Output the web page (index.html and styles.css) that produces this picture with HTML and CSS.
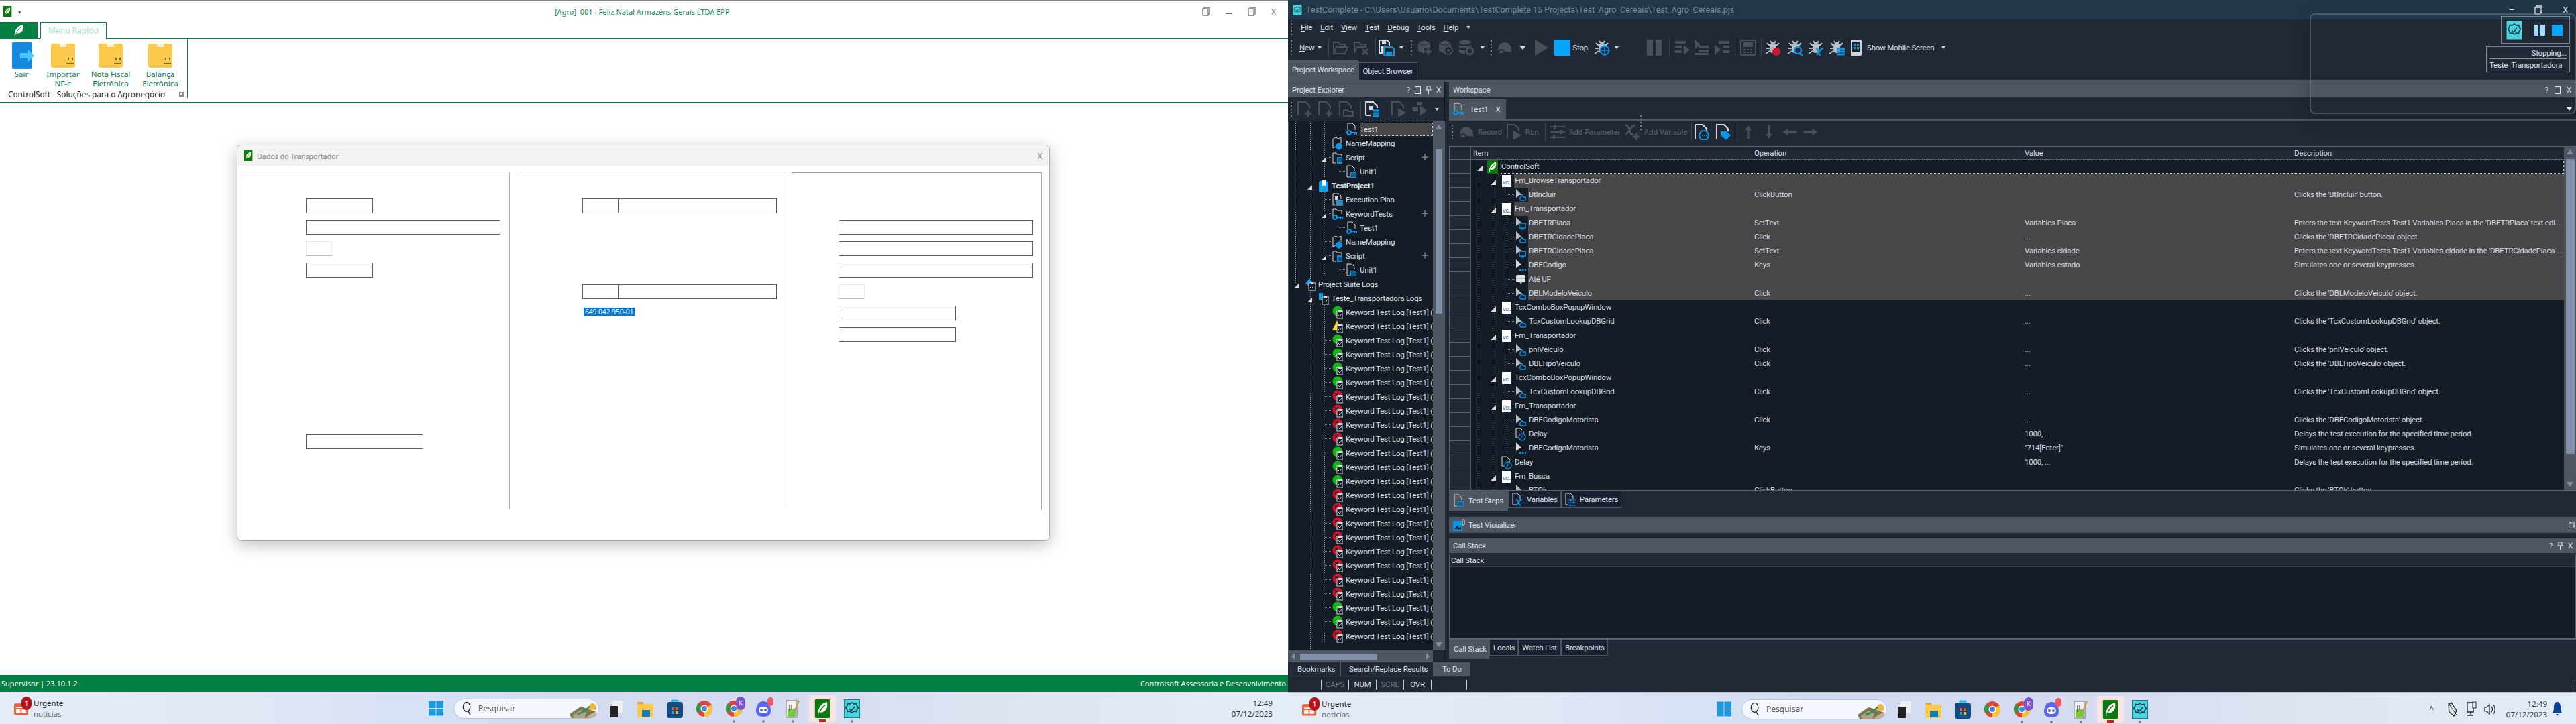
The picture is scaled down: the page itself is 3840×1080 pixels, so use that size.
FILE: index.html
```html
<!DOCTYPE html>
<html lang="pt-BR">
<head>
    <meta charset="UTF-8">
    <meta name="viewport" content="width=device-width, initial-scale=1.0">
    <title>ControlSoft / TestComplete</title>
    <link rel="stylesheet" href="styles.css">
</head>
<body>

    <!-- icon sprites -->
    <svg class="sprites" xmlns="http://www.w3.org/2000/svg">
        <symbol id="leaf" viewBox="0 0 16 20"><rect width="16" height="20" rx="1" fill="#0a7a0a"/><path d="M3 17C3 9 7 4 13 3c1 6-1 10-6 11-1 0-2 0-3 3z" fill="#fff"/><path d="M4 16C6 11 8 8 11 6" stroke="#0a7a0a" fill="none"/></symbol>
        <symbol id="leaf-bare" viewBox="0 0 16 20"><path d="M1 19C1 9 6 3 15 1c1 8-1 13-8 14-2 0-4 1-6 4z" fill="#fff"/><path d="M3 16C6 11 8 8 12 5" stroke="#0a7f44" fill="none"/></symbol>
        <symbol id="exit" viewBox="0 0 34 40"><rect width="30" height="40" rx="2" fill="#1389e0"/><path d="M12 16h11v-6l10 10-10 10v-6H12z" fill="#47c7fb"/></symbol>
        <symbol id="box" viewBox="0 0 36 36"><rect width="36" height="36" rx="3" fill="#fdc94a"/><rect x="13" width="10" height="5" fill="#fef1d4"/><path d="M23 30h11M26 25v-4M32 25v-4" stroke="#7b6328" stroke-width="2" fill="none"/></symbol>

        <symbol id="open" viewBox="0 0 24 24"><path d="M2 21V4h7l2 3h8v4M2 21l4-10h17l-4 10z" stroke="currentColor" stroke-width="2" fill="none"/></symbol>
        <symbol id="closefile" viewBox="0 0 24 24"><path d="M2 19V4h7l2 3h8v4M2 19l4-8h14" stroke="currentColor" stroke-width="2" fill="none"/><path d="M14 14l8 8M22 14l-8 8" stroke="currentColor" stroke-width="3"/></symbol>
        <symbol id="save" viewBox="0 0 24 24"><path d="M1 1h12l3 3v7H5v9H1z" fill="none" stroke="#d6d9de" stroke-width="2"/><rect x="5" y="2" width="6" height="5" fill="#d6d9de"/><path d="M8 11h12l3 3v10H8z" fill="none" stroke="#0a96e6" stroke-width="2"/><rect x="11" y="18" width="9" height="5" fill="#0a96e6"/></symbol>
        <symbol id="cube-plus" viewBox="0 0 24 24"><path d="M11 1l9 4v7H11v9l-9-4V5z" fill="currentColor"/><path d="M2 5l9 4 9-4" stroke="#212836" fill="none"/><path d="M17 13v10M12 18h10" stroke="currentColor" stroke-width="3"/></symbol>
        <symbol id="cube-target" viewBox="0 0 24 24"><path d="M11 1l9 4v5l-9 11-9-4V5z" fill="currentColor"/><path d="M2 5l9 4 9-4" stroke="#212836" fill="none"/><circle cx="16" cy="16" r="6" fill="#212836" stroke="currentColor" stroke-width="2"/><circle cx="16" cy="16" r="2" fill="currentColor"/></symbol>
        <symbol id="db-gear" viewBox="0 0 24 24"><ellipse cx="10" cy="4" rx="9" ry="3.5" fill="currentColor"/><path d="M1 8c3 2 15 2 18 0v4H1zM1 14c3 2 8 2 9 2v5c-3 0-7 0-9-2z" fill="currentColor"/><circle cx="17" cy="17" r="5" fill="none" stroke="currentColor" stroke-width="3"/></symbol>
        <symbol id="record" viewBox="0 0 24 24"><path d="M2 14a10 10 0 1 1 20 0v6H2z" fill="currentColor"/><circle cx="7" cy="19" r="4" fill="none" stroke="#212836" stroke-width="2"/><path d="M11 19h9v4" stroke="#212836" fill="none" stroke-width="2"/></symbol>
        <symbol id="play" viewBox="0 0 24 24"><path d="M2 0l20 12L2 24z" fill="currentColor"/></symbol>
        <symbol id="bug" viewBox="0 0 24 24"><path d="M8 2l2 3h4l2-3M5 8h14M3 5l4 4M21 5l-4 4M2 13h5M1 21l6-4" stroke="#b9bdc3" stroke-width="2" fill="none"/><path d="M7 7h10v10c0 4-10 4-10 0z" fill="#b9bdc3"/></symbol>
        <symbol id="bug-target" viewBox="0 0 24 24"><use href="#bug"/><circle cx="16" cy="16" r="6.5" fill="#212836" stroke="#0a96e6" stroke-width="2"/><path d="M16 8v16M8 16h16" stroke="#0a96e6" stroke-width="1.5"/></symbol>
        <symbol id="bug-red" viewBox="0 0 24 24"><use href="#bug"/><circle cx="17" cy="18" r="6" fill="#d3152c"/></symbol>
        <symbol id="bug-find" viewBox="0 0 24 24"><use href="#bug"/><circle cx="16" cy="16" r="5" fill="#212836" stroke="#0a96e6" stroke-width="2.5"/><path d="M19 20l4 4" stroke="#0a96e6" stroke-width="3"/></symbol>
        <symbol id="bug-x" viewBox="0 0 24 24"><use href="#bug"/><path d="M12 13c4 0 3 10 7 10M23 13c-4 0-6 6-10 10" stroke="#0a96e6" stroke-width="2.5" fill="none"/></symbol>
        <symbol id="bug-list" viewBox="0 0 24 24"><use href="#bug"/><path d="M12 14h12M12 18h12M12 22h12" stroke="#0a96e6" stroke-width="3"/></symbol>
        <symbol id="pause" viewBox="0 0 24 24"><path d="M1 0h9v24H1zM14 0h9v24h-9z" fill="currentColor"/></symbol>
        <symbol id="step-in" viewBox="0 0 24 24"><path d="M1 2h16v4H1zM1 9h10v4H1zM1 16h10v4H1zM14 8l9 7-9 8z" fill="currentColor"/></symbol>
        <symbol id="step-over" viewBox="0 0 24 24"><path d="M2 0l9 7-9 7zM8 9h15v4H8zM8 15h15v4H8zM2 20h21v3H2z" fill="currentColor"/></symbol>
        <symbol id="step-out" viewBox="0 0 24 24"><path d="M7 2h16v4H7zM13 9h10v4H13zM13 16h10v4H13zM1 8l9 7-9 8z" fill="currentColor"/></symbol>
        <symbol id="calc" viewBox="0 0 24 24"><rect x="1" y="1" width="22" height="22" rx="2" fill="none" stroke="currentColor" stroke-width="2"/><rect x="5" y="4" width="14" height="7" fill="currentColor"/><path d="M5 15h3M10 15h3M15 15h3M5 19h3M10 19h3M15 19h3" stroke="currentColor" stroke-width="2"/></symbol>
        <symbol id="phone" viewBox="0 0 16 24"><rect width="16" height="24" rx="2" fill="#cfd3d8"/><rect x="2" y="3" width="12" height="16" fill="#212836"/><path d="M4 6h3v3H4zM9 6h3v3H9zM4 11h3v3H4zM9 11h3v3H9z" fill="#0a96e6"/></symbol>

        <symbol id="doc-plus" viewBox="0 0 24 24"><path d="M2 21V1h11l6 6v4" fill="none" stroke="currentColor" stroke-width="2"/><path d="M17 13v10M12 18h10" stroke="currentColor" stroke-width="3"/></symbol>
        <symbol id="doc-open" viewBox="0 0 24 24"><path d="M2 21V1h11l6 6v4" fill="none" stroke="currentColor" stroke-width="2"/><path d="M8 22v-9h5l2 2h7v7z" fill="none" stroke="currentColor" stroke-width="2"/></symbol>
        <symbol id="doc-plan" viewBox="0 0 24 24"><path d="M2 21V1h11l6 6v3M9 21H2" fill="none" stroke="#d6d9de" stroke-width="2"/><rect x="7" y="7" width="5" height="6" fill="#d6d9de"/><path d="M12 14h10M12 18h10M12 22h10" stroke="#0a96e6" stroke-width="3"/></symbol>
        <symbol id="doc-run" viewBox="0 0 24 24"><path d="M2 21V1h11l6 6v4" fill="none" stroke="currentColor" stroke-width="2"/><path d="M11 10l12 7-12 7z" fill="currentColor"/></symbol>
        <symbol id="diamond-run" viewBox="0 0 24 24"><path d="M8 1h8v5H8zM2 9h8v6H2zM13 6l10 8-10 8z" fill="currentColor"/></symbol>
        <symbol id="doc-comment" viewBox="0 0 24 24"><path d="M2 23V1h11l6 6v4" fill="none" stroke="#d6d9de" stroke-width="2"/><circle cx="15" cy="17" r="7" fill="#212836" stroke="#0a96e6" stroke-width="2"/><path d="M12 17h1M15 17h1M18 17h1" stroke="#0a96e6" stroke-width="2"/></symbol>
        <symbol id="doc-tag" viewBox="0 0 24 24"><path d="M2 23V1h11l6 6v4" fill="none" stroke="#d6d9de" stroke-width="2"/><path d="M8 11h9l6 6-7 7-8-7z" fill="#0a96e6"/></symbol>
        <symbol id="sliders" viewBox="0 0 24 24"><path d="M1 4h22M1 12h22M1 20h22" stroke="currentColor" stroke-width="2"/><path d="M6 1h3v6H6zM15 9h3v6h-3zM5 17h3v6H5z" fill="currentColor"/></symbol>
        <symbol id="var-plus" viewBox="0 0 24 24"><path d="M2 2c8 0 4 14 12 14M16 2C10 2 8 12 2 16" stroke="currentColor" stroke-width="3" fill="none"/><path d="M18 14v10M13 19h10" stroke="currentColor" stroke-width="3"/></symbol>
        <symbol id="arrow-up" viewBox="0 0 14 24"><path d="M7 0l6 9H9v15H5V9H1z" fill="currentColor"/></symbol>
        <symbol id="arrow-down" viewBox="0 0 14 24"><path d="M7 24l6-9H9V0H5v15H1z" fill="currentColor"/></symbol>
        <symbol id="arrow-left" viewBox="0 0 24 14"><path d="M0 7l9-6v4h15v4H9v4z" fill="currentColor"/></symbol>
        <symbol id="arrow-right" viewBox="0 0 24 14"><path d="M24 7l-9-6v4H0v4h15v4z" fill="currentColor"/></symbol>

        <symbol id="t-key" viewBox="0 0 16 20"><path d="M2 11V1h7l4 4v6" fill="none" stroke="#d6d9de"/><circle cx="4" cy="15" r="3" fill="none" stroke="#0a96e6" stroke-width="2"/><path d="M7 15h8v3M12 15v3" stroke="#0a96e6" stroke-width="2" fill="none"/></symbol>
        <symbol id="t-unit" viewBox="0 0 16 20"><path d="M5 18H1V1h7l4 4v4" fill="none" stroke="#d6d9de"/><path d="M6 11h9v8H6z" fill="#0a96e6"/><path d="M7 13h7M7 15h7M7 17h7" stroke="#151c25"/></symbol>
        <symbol id="t-script" viewBox="0 0 16 20"><path d="M5 18H1V3h5l1 2h7v3" fill="none" stroke="#d6d9de"/><path d="M7 9h8v10H7z" fill="#0a96e6"/><path d="M8 12h6M8 14h6M8 16h6" stroke="#151c25"/></symbol>
        <symbol id="t-map" viewBox="0 0 16 20"><path d="M1 17V3l4-2 4 2 4-2v9M1 17l4-2" fill="none" stroke="#d6d9de"/><path d="M10 9l5 3v5l-5 3-5-3v-5z" fill="#0a96e6"/></symbol>
        <symbol id="t-kwfolder" viewBox="0 0 16 20"><path d="M1 14V3h5l1 2h7v5" fill="none" stroke="#d6d9de"/><circle cx="4" cy="15" r="3" fill="none" stroke="#0a96e6" stroke-width="2"/><path d="M7 15h8v3M12 15v3" stroke="#0a96e6" stroke-width="2" fill="none"/></symbol>
        <symbol id="t-proj" viewBox="0 0 16 20"><path d="M1 4l5-2h4l5 3v14H1z" fill="#0ea0ea"/><path d="M6 2h5v9l-3-2-2 2z" fill="#fff"/></symbol>
        <symbol id="t-plan" viewBox="0 0 16 20"><path d="M4 18H1V1h9l3 3v5" fill="none" stroke="#d6d9de"/><rect x="4" y="5" width="4" height="5" fill="#d6d9de"/><path d="M6 12h10M6 15h10M6 18h10" stroke="#0a96e6" stroke-width="2"/></symbol>
        <symbol id="t-suite" viewBox="0 0 16 20"><path d="M1 9l6-8 4 6-4 6z" fill="#0ea0ea"/><rect x="6" y="8" width="10" height="11" fill="#151c25" stroke="#d6d9de"/><path d="M9 7h4v3H9z" fill="#d6d9de"/><path d="M8 14l2 2 4-4" stroke="#d6d9de" fill="none"/></symbol>
        <symbol id="t-plog" viewBox="0 0 16 20"><path d="M1 2h6v10H1z" fill="#0ea0ea"/><rect x="6" y="8" width="10" height="11" fill="#151c25" stroke="#d6d9de"/><path d="M9 7h4v3H9z" fill="#d6d9de"/><path d="M8 14l2 2 4-4" stroke="#d6d9de" fill="none"/></symbol>
        <symbol id="log-ok" viewBox="0 0 16 20"><circle cx="8" cy="8" r="7.5" fill="#15b515"/><rect x="7" y="8" width="9" height="11" fill="#151c25" stroke="#d6d9de"/><path d="M9 7h5v3H9z" fill="#d6d9de"/><path d="M9 14l2 2 3-4" stroke="#d6d9de" fill="none"/></symbol>
        <symbol id="log-warn" viewBox="0 0 16 20"><path d="M7 1l7 15H0z" fill="#f4d511"/><rect x="7" y="8" width="9" height="11" fill="#151c25" stroke="#d6d9de"/><path d="M9 7h5v3H9z" fill="#d6d9de"/><path d="M9 14l2 2 3-4" stroke="#d6d9de" fill="none"/></symbol>
        <symbol id="log-err" viewBox="0 0 16 20"><circle cx="8" cy="8" r="7.5" fill="#d3152c"/><path d="M4 4l5 5M9 4L4 9" stroke="#151c25" stroke-width="1.5"/><rect x="7" y="8" width="9" height="11" fill="#151c25" stroke="#d6d9de"/><path d="M9 7h5v3H9z" fill="#d6d9de"/><path d="M9 14l2 2 3-4" stroke="#d6d9de" fill="none"/></symbol>

        <symbol id="g-click" viewBox="0 0 16 20"><path d="M1 1l9 9H6l-1 1-4 3z" fill="#b9bdc3"/><path d="M8 13l2-3 2 3h3v5H8l-2-3z" fill="none" stroke="#0a96e6" stroke-width="1.5"/></symbol>
        <symbol id="g-screen" viewBox="0 0 16 20"><path d="M1 1l9 9H6l-1 1-4 3z" fill="#b9bdc3"/><path d="M6 10h9v7H6z" fill="#151c25" stroke="#0a96e6" stroke-width="1.5"/><path d="M10.5 17v2M8 19h5" stroke="#0a96e6"/></symbol>
        <symbol id="g-keys" viewBox="0 0 16 20"><path d="M1 1l9 9H6l-1 1-4 3z" fill="#d6d9de"/><path d="M6 15h2.500v3H6zM10 15h2.500v3H10zM14 15h2v3h-2z" fill="#0a96e6"/></symbol>
        <symbol id="g-comment" viewBox="0 0 16 20"><path d="M3 3h10a2 2 0 0 1 2 2v7a2 2 0 0 1-2 2h-3l-2 3-1-3H3a2 2 0 0 1-2-2V5a2 2 0 0 1 2-2z" fill="#e6e6e6"/><path d="M1 8h14" stroke="#999"/></symbol>
        <symbol id="g-delay" viewBox="0 0 16 20"><path d="M4 15H1V1h7l4 4v4" fill="none" stroke="#d6d9de"/><circle cx="10" cy="14" r="5" fill="#151c25" stroke="#0a96e6" stroke-width="1.5"/><path d="M10 11v3l-2 2" stroke="#0a96e6" fill="none"/></symbol>
        <symbol id="expand" viewBox="0 0 8 8"><path d="M8 0v8H0z" fill="#d6d9de"/></symbol>
        <symbol id="doc-x" viewBox="0 0 16 20"><path d="M6 18H1V1h7l4 4v4" fill="none" stroke="#d6d9de"/><path d="M6 10c4 0 3 9 7 9M15 10c-4 0-5 6-9 9" stroke="#0a96e6" stroke-width="2" fill="none"/></symbol>
        <symbol id="doc-params" viewBox="0 0 16 20"><path d="M5 18H1V1h7l4 4v4" fill="none" stroke="#d6d9de"/><path d="M4 11h12M4 15h12M4 19h12" stroke="#0a96e6"/><path d="M8 9.500h2v3H8zM12 13.500h2v3h-2zM7 17.500h2v2.500H7z" fill="#0a96e6"/></symbol>

        <symbol id="win" viewBox="0 0 24 24"><path d="M0 0h11.5v11.5H0zM12.500 0H24v11.500H12.500zM0 12.500h11.500V24H0zM12.500 12.500H24V24H12.500z" fill="#1c9ae0"/></symbol>
        <symbol id="news" viewBox="0 0 24 24"><rect x="1" y="4" width="22" height="18" rx="3" fill="#e9613d"/><path d="M4 9h16v2H4zM4 13h7v6H4zM13 13h7v6h-7z" fill="#fff"/></symbol>
        <symbol id="glass" viewBox="0 0 16 24"><ellipse cx="7.5" cy="9" rx="6" ry="8" fill="none" stroke="#222" stroke-width="1.6"/><path d="M10 16l4 7" stroke="#222" stroke-width="1.6"/></symbol>
        <symbol id="hills" viewBox="0 0 48 36"><path d="M34 20c0-16 14-16 14 0z" fill="#f2b33d"/><path d="M0 28l20-14 28 10v12H4z" fill="#7b7a4e"/><path d="M6 30l14-10 10 6-4 10H8z" fill="#b4a082"/><path d="M14 28c8-2 14-6 22-14" stroke="#2e8a5b" stroke-width="3" fill="none"/><path d="M28 34l20-12v14z" fill="#c6b09a"/></symbol>
        <symbol id="blocks" viewBox="0 0 24 28"><rect x="7" y="2" width="15" height="18" rx="1" fill="#eee"/><rect x="3" y="10" width="12" height="17" rx="1" fill="#222"/></symbol>
        <symbol id="explorer" viewBox="0 0 24 28"><path d="M0 4h8l2 3H0z" fill="#e5a42a"/><path d="M0 7h24v20H0z" fill="#fcca4d"/><rect x="7" y="16" width="12" height="10" fill="#0f7cc4"/></symbol>
        <symbol id="store" viewBox="0 0 24 28"><path d="M8 4V2h8v2" fill="none" stroke="#31b7e8" stroke-width="3"/><rect x="0" y="4" width="24" height="24" rx="4" fill="#134b84"/><path d="M7 12h4v4H7zM13 12h4v4h-4z" fill="#e6562a"/><path d="M7 18h4v4H7z" fill="#1ba1e2"/><path d="M13 18h4v4h-4z" fill="#f5b916"/></symbol>
        <symbol id="chrome" viewBox="0 0 24 28"><circle cx="12" cy="14" r="12" fill="#dd4537"/><path d="M12 14L1.6 20A12 12 0 0 1 3 6z" fill="#2a9a47"/><path d="M12 14l0 12a12 12 0 0 0 10.4-18z" fill="#fbc52d"/><circle cx="12" cy="14" r="5.5" fill="#fff"/><circle cx="12" cy="14" r="4" fill="#3e86e8"/></symbol>
        <symbol id="discord" viewBox="0 0 24 28"><path d="M12 3c8 0 11 8 11 14 0 6-3 9-11 9S1 23 1 17C1 11 4 3 12 3z" fill="#5865f2"/><rect x="5" y="11" width="14" height="10" rx="5" fill="#fff"/><circle cx="9" cy="16" r="2" fill="#5865f2"/><circle cx="15" cy="16" r="2" fill="#5865f2"/></symbol>
        <symbol id="notepad" viewBox="0 0 20 28"><rect x="0" y="2" width="16" height="25" fill="#f0f0f0" stroke="#777"/><path d="M2 14h12v12H2z" fill="#78c93a"/><path d="M5 8v10M8 8v7" stroke="#222"/><path d="M13 16L19 2" stroke="#c79a2b" stroke-width="2"/></symbol>
        <symbol id="tc" viewBox="0 0 24 28"><rect width="24" height="28" rx="1" fill="#49d5e0" stroke="#123"/><path d="M12 5l3 2 3.5-.5 1 3.500 2 2.500-2 2.500-1 3.500-3.500-.5-3 2-3-2-3.500.5-1-3.500-2-2.500 2-2.500 1-3.500 3.500.5z" fill="none" stroke="#12333f" stroke-width="1.5"/><path d="M8 14l3 3 5-6" stroke="#12333f" stroke-width="1.5" fill="none"/></symbol>
        <symbol id="bell" viewBox="0 0 14 24"><path d="M7 1c4 0 5 4 5 8s1 7 2 8H0c1-1 2-4 2-8s1-8 5-8zM5 19h4l-2 3z" fill="#06419a"/></symbol>
        <symbol id="restore" viewBox="0 0 12 14"><path d="M3 3V1h8v10H9M1 3h8v10H1z" fill="none" stroke="currentColor" stroke-width="1.3"/></symbol>
        <symbol id="pin" viewBox="0 0 10 14"><path d="M2 1h6v6H2zM0 7h10M5 7v7" fill="none" stroke="currentColor" stroke-width="1.3"/></symbol>
    </svg>

    <!-- left screen: ControlSoft -->
    <section class="screen screen-app">
        <div class="app-title">
            <svg class="qa-logo"><use href="#leaf"/></svg>
            <span class="qa-drop">▾</span>
            <span class="app-name">[Agro]&nbsp; 001 - Feliz Natal Armazéns Gerais LTDA EPP</span>
            <div class="app-controls">
                <svg class="ctl"><use href="#restore"/></svg>
                <span class="ctl-min"></span>
                <svg class="ctl"><use href="#restore"/></svg>
                <span>X</span>
            </div>
        </div>

        <div class="ribbon-tabs">
            <div class="ribbon-home"><svg><use href="#leaf-bare"/></svg></div>
            <div class="ribbon-tab">Menu Rápido</div>
        </div>

        <div class="ribbon">
            <div class="ribbon-group">
                <div class="ribbon-btns">
                    <div class="rb-btn rb-exit"><svg><use href="#exit"/></svg><span>Sair</span></div>
                    <div class="rb-btn rb-import"><svg><use href="#box"/></svg><span>Importar<br>NF-e</span></div>
                    <div class="rb-btn rb-nota"><svg><use href="#box"/></svg><span>Nota Fiscal<br>Eletrônica</span></div>
                    <div class="rb-btn rb-bal"><svg><use href="#box"/></svg><span>Balança<br>Eletrônica</span></div>
                </div>
                <div class="group-label"><span>ControlSoft - Soluções para o Agronegócio</span><i class="launcher"></i></div>
            </div>
        </div>

        <div class="app-body"></div>

        <div class="app-status">
            <span>Supervisor | 23.10.1.2</span>
            <span>Controlsoft Assessoria e Desenvolvimento</span>
        </div>

        <!-- Dados do Transportador window -->
        <div class="dialog">
            <div class="dialog-title">
                <svg class="dialog-logo"><use href="#leaf"/></svg>
                <span>Dados do Transportador</span>
                <span class="dialog-close">X</span>
            </div>
            <div class="dialog-body">
                <div class="panel panel-a">
                    <div class="field f100"></div>
                    <div class="field f290"></div>
                    <div class="check"></div>
                    <div class="field f100"></div>
                    <div class="field f175 far"></div>
                </div>
                <div class="panel panel-b">
                    <div class="field f290 split"><i></i></div>
                    <div class="blank"></div>
                    <div class="blank"></div>
                    <div class="blank"></div>
                    <div class="field f290 split"><i></i></div>
                    <div class="doc-value"><span>649.042.950-01</span></div>
                </div>
                <div class="panel panel-c">
                    <div class="blank"></div>
                    <div class="field f290"></div>
                    <div class="field f290"></div>
                    <div class="field f290"></div>
                    <div class="check"></div>
                    <div class="field f175"></div>
                    <div class="field f175"></div>
                </div>
            </div>
        </div>

        <div class="taskbar">
            <div class="tb-news">
                <div class="news-icon"><svg><use href="#news"/></svg><b>1</b></div>
                <div class="news-text"><span>Urgente</span><span class="muted">noticias</span></div>
            </div>
            <div class="tb-apps">
                <svg class="tb-start"><use href="#win"/></svg>
                <div class="tb-search"><svg class="glass"><use href="#glass"/></svg><span>Pesquisar</span><svg class="hills"><use href="#hills"/></svg></div>
                <div class="tb-app"><svg><use href="#blocks"/></svg></div>
                <div class="tb-app"><svg><use href="#explorer"/></svg></div>
                <div class="tb-app"><svg><use href="#store"/></svg></div>
                <div class="tb-app"><svg><use href="#chrome"/></svg></div>
                <div class="tb-app run"><svg><use href="#chrome"/></svg><b class="badge-k">K</b></div>
                <div class="tb-app run"><svg><use href="#discord"/></svg><b class="badge-r"></b></div>
                <div class="tb-app run"><svg><use href="#notepad"/></svg></div>
                <div class="tb-app active"><svg><use href="#leaf"/></svg></div>
                <div class="tb-app run"><svg><use href="#tc"/></svg></div>
            </div>
            <div class="tb-tray">
                <div class="tb-clock"><span>12:49</span><span>07/12/2023</span></div>
            </div>
        </div>
    </section>

    <!-- right screen: TestComplete -->
    <section class="screen screen-tc">
        <div class="tc-title">
            <svg class="tc-logo"><use href="#tc"/></svg>
            <span>TestComplete - C:\Users\Usuario\Documents\TestComplete 15 Projects\Test_Agro_Cereais\Test_Agro_Cereais.pjs</span>
            <div class="tc-controls">
                <span>–</span>
                <svg><use href="#restore"/></svg>
                <span>X</span>
            </div>
        </div>

        <div class="tc-menu">
            <i class="grip"></i>
            <span><u>F</u>ile</span><span><u>E</u>dit</span><span><u>V</u>iew</span><span><u>T</u>est</span><span><u>D</u>ebug</span><span><u>T</u>ools</span><span><u>H</u>elp</span>
            <i class="tri"></i>
        </div>

        <div class="toolbar tc-tools">
            <i class="grip"></i>
            <span class="tb-text push4"><u>N</u>ew</span><i class="tri pull2"></i>
            <i class="sep push3"></i>
            <svg class="ic dim pull2"><use href="#open"/></svg>
            <svg class="ic dim"><use href="#closefile"/></svg>
            <i class="sep push2"></i>
            <svg class="ic pull3"><use href="#save"/></svg><i class="tri"></i>
            <i class="grip push4"></i>
            <svg class="ic dim"><use href="#cube-plus"/></svg>
            <svg class="ic dim"><use href="#cube-target"/></svg>
            <svg class="ic dim"><use href="#db-gear"/></svg><i class="tri push2"></i>
            <i class="grip push2"></i>
            <svg class="ic dim"><use href="#record"/></svg><i class="tri wide push3"></i>
            <svg class="ic dim push4"><use href="#play"/></svg>
            <b class="stop"></b><span class="tb-text pull4">Stop</span>
            <svg class="ic push2"><use href="#bug-target"/></svg><i class="tri"></i>
            <i class="grip far"></i>
            <svg class="ic dim"><use href="#pause"/></svg>
            <i class="sep push3"></i>
            <svg class="ic dim"><use href="#step-in"/></svg>
            <svg class="ic dim pull3"><use href="#step-over"/></svg>
            <svg class="ic dim"><use href="#step-out"/></svg>
            <i class="sep"></i>
            <svg class="ic dim"><use href="#calc"/></svg>
            <i class="sep"></i>
            <svg class="ic pull2"><use href="#bug-red"/></svg>
            <svg class="ic push2"><use href="#bug-find"/></svg>
            <svg class="ic"><use href="#bug-x"/></svg>
            <svg class="ic"><use href="#bug-list"/></svg>
            <svg class="ic phone"><use href="#phone"/></svg>
            <span class="tb-text">Show Mobile Screen</span><i class="tri push4"></i>
        </div>

        <div class="doc-tabs">
            <div class="doc-tab on">Project Workspace</div>
            <div class="doc-tab">Object Browser</div>
        </div>

        <div class="tc-main">
            <aside class="explorer">
                <div class="pane-head">
                    <span>Project Explorer</span>
                    <div class="pane-btns"><span>?</span><i class="box"></i><svg><use href="#pin"/></svg><span>X</span></div>
                </div>
                <div class="toolbar ex-tools">
                    <i class="grip"></i>
                    <svg class="ic dim"><use href="#doc-plus"/></svg>
                    <svg class="ic dim"><use href="#doc-plus"/></svg>
                    <svg class="ic dim"><use href="#doc-open"/></svg>
                    <i class="sep"></i>
                    <svg class="ic"><use href="#doc-plan"/></svg>
                    <i class="sep"></i>
                    <svg class="ic dim"><use href="#doc-run"/></svg>
                    <svg class="ic dim"><use href="#diamond-run"/></svg>
                    <i class="tri push4"></i>
                </div>
                <div class="tree-wrap">
                    <div class="tree">
                        <div class="tr l3 selected"><svg><use href="#t-key"/></svg><span>Test1</span></div>
                        <div class="tr l2"><svg><use href="#t-map"/></svg><span>NameMapping</span></div>
                        <div class="tr l2 open"><svg class="x"><use href="#expand"/></svg><svg><use href="#t-script"/></svg><span>Script</span><b class="plus">+</b></div>
                        <div class="tr l3"><svg><use href="#t-unit"/></svg><span>Unit1</span></div>
                        <div class="tr l1 open"><svg class="x"><use href="#expand"/></svg><svg><use href="#t-proj"/></svg><span class="strong">TestProject1</span></div>
                        <div class="tr l2"><svg><use href="#t-plan"/></svg><span>Execution Plan</span></div>
                        <div class="tr l2 open"><svg class="x"><use href="#expand"/></svg><svg><use href="#t-kwfolder"/></svg><span>KeywordTests</span><b class="plus">+</b></div>
                        <div class="tr l3"><svg><use href="#t-key"/></svg><span>Test1</span></div>
                        <div class="tr l2"><svg><use href="#t-map"/></svg><span>NameMapping</span></div>
                        <div class="tr l2 open"><svg class="x"><use href="#expand"/></svg><svg><use href="#t-script"/></svg><span>Script</span><b class="plus">+</b></div>
                        <div class="tr l3"><svg><use href="#t-unit"/></svg><span>Unit1</span></div>
                        <div class="tr l0 open"><svg class="x"><use href="#expand"/></svg><svg><use href="#t-suite"/></svg><span>Project Suite Logs</span></div>
                        <div class="tr l1 open"><svg class="x"><use href="#expand"/></svg><svg><use href="#t-plog"/></svg><span>Teste_Transportadora Logs</span></div>
                        <div class="tr l2 log"><svg><use href="#log-ok"/></svg><span>Keyword Test Log [Test1] (</span></div>
                        <div class="tr l2 log"><svg><use href="#log-warn"/></svg><span>Keyword Test Log [Test1] (</span></div>
                        <div class="tr l2 log"><svg><use href="#log-ok"/></svg><span>Keyword Test Log [Test1] (</span></div>
                        <div class="tr l2 log"><svg><use href="#log-ok"/></svg><span>Keyword Test Log [Test1] (</span></div>
                        <div class="tr l2 log"><svg><use href="#log-ok"/></svg><span>Keyword Test Log [Test1] (</span></div>
                        <div class="tr l2 log"><svg><use href="#log-ok"/></svg><span>Keyword Test Log [Test1] (</span></div>
                        <div class="tr l2 log"><svg><use href="#log-err"/></svg><span>Keyword Test Log [Test1] (</span></div>
                        <div class="tr l2 log"><svg><use href="#log-err"/></svg><span>Keyword Test Log [Test1] (</span></div>
                        <div class="tr l2 log"><svg><use href="#log-err"/></svg><span>Keyword Test Log [Test1] (</span></div>
                        <div class="tr l2 log"><svg><use href="#log-err"/></svg><span>Keyword Test Log [Test1] (</span></div>
                        <div class="tr l2 log"><svg><use href="#log-ok"/></svg><span>Keyword Test Log [Test1] (</span></div>
                        <div class="tr l2 log"><svg><use href="#log-ok"/></svg><span>Keyword Test Log [Test1] (</span></div>
                        <div class="tr l2 log"><svg><use href="#log-ok"/></svg><span>Keyword Test Log [Test1] (</span></div>
                        <div class="tr l2 log"><svg><use href="#log-err"/></svg><span>Keyword Test Log [Test1] (</span></div>
                        <div class="tr l2 log"><svg><use href="#log-err"/></svg><span>Keyword Test Log [Test1] (</span></div>
                        <div class="tr l2 log"><svg><use href="#log-err"/></svg><span>Keyword Test Log [Test1] (</span></div>
                        <div class="tr l2 log"><svg><use href="#log-err"/></svg><span>Keyword Test Log [Test1] (</span></div>
                        <div class="tr l2 log"><svg><use href="#log-err"/></svg><span>Keyword Test Log [Test1] (</span></div>
                        <div class="tr l2 log"><svg><use href="#log-err"/></svg><span>Keyword Test Log [Test1] (</span></div>
                        <div class="tr l2 log"><svg><use href="#log-err"/></svg><span>Keyword Test Log [Test1] (</span></div>
                        <div class="tr l2 log"><svg><use href="#log-err"/></svg><span>Keyword Test Log [Test1] (</span></div>
                        <div class="tr l2 log"><svg><use href="#log-ok"/></svg><span>Keyword Test Log [Test1] (</span></div>
                        <div class="tr l2 log"><svg><use href="#log-ok"/></svg><span>Keyword Test Log [Test1] (</span></div>
                        <div class="tr l2 log"><svg><use href="#log-err"/></svg><span>Keyword Test Log [Test1] (</span></div>
                    </div>
                    <div class="vscroll tree-scroll"><i class="up"></i><b></b><i class="down"></i></div>
                </div>
                <div class="hscroll"><i class="left"></i><b></b><i class="right"></i></div>
            </aside>

            <main class="workspace">
                <div class="pane-head">
                    <span>Workspace</span>
                    <div class="pane-btns ws-btns"><span>?</span><i class="box"></i><span>X</span></div>
                </div>
                <div class="ws-tabs">
                    <div class="ws-tab"><svg><use href="#t-key"/></svg><span>Test1</span><span class="close">X</span></div>
                </div>
                <div class="toolbar ws-tools">
                    <i class="grip"></i>
                    <svg class="ic dim push3"><use href="#record"/></svg><span class="tb-text off">Record</span>
                    <svg class="ic dim"><use href="#doc-run"/></svg><span class="tb-text off">Run</span>
                    <i class="sep push3"></i>
                    <svg class="ic dim"><use href="#sliders"/></svg><span class="tb-text off">Add Parameter</span>
                    <svg class="ic dim"><use href="#var-plus"/></svg><span class="tb-text off">Add Variable</span>
                    <i class="sep"></i>
                    <svg class="ic pull3"><use href="#doc-comment"/></svg>
                    <svg class="ic push3"><use href="#doc-tag"/></svg>
                    <i class="sep push3"></i>
                    <svg class="arr-v dim"><use href="#arrow-up"/></svg>
                    <svg class="arr-v dim"><use href="#arrow-down"/></svg>
                    <svg class="arr-h dim"><use href="#arrow-left"/></svg>
                    <svg class="arr-h dim"><use href="#arrow-right"/></svg>
                </div>

                <div class="steps">
                    <div class="steps-table">
                        <div class="row head"><div class="gut"></div><div class="c">Item</div><div class="c">Operation</div><div class="c">Value</div><div class="c">Description</div></div>
                        <div class="row focus"><div class="gut"></div><div class="item lv0"><svg class="x"><use href="#expand"/></svg><svg class="i"><use href="#leaf"/></svg><div class="name">ControlSoft</div></div><div class="c"></div><div class="c"></div><div class="c"></div></div>
                        <div class="row sel"><div class="gut"></div><div class="item lv1"><svg class="x"><use href="#expand"/></svg><svg class="i vcl" viewBox="0 0 14 18"><rect width="14" height="18" fill="#fff"/><text x="1" y="14" font-size="7" fill="#0d4f9c">VCL</text></svg><div class="name">Fm_BrowseTransportador</div></div><div class="c"></div><div class="c"></div><div class="c"></div></div>
                        <div class="row sel"><div class="gut"></div><div class="item lv2"><svg class="i"><use href="#g-click"/></svg><div class="name">BtIncluir</div></div><div class="c">ClickButton</div><div class="c"></div><div class="c">Clicks the 'BtIncluir' button.</div></div>
                        <div class="row sel"><div class="gut"></div><div class="item lv1"><svg class="x"><use href="#expand"/></svg><svg class="i vcl" viewBox="0 0 14 18"><rect width="14" height="18" fill="#fff"/><text x="1" y="14" font-size="7" fill="#0d4f9c">VCL</text></svg><div class="name">Fm_Transportador</div></div><div class="c"></div><div class="c"></div><div class="c"></div></div>
                        <div class="row sel"><div class="gut"></div><div class="item lv2"><svg class="i"><use href="#g-screen"/></svg><div class="name">DBETRPlaca</div></div><div class="c">SetText</div><div class="c">Variables.Placa</div><div class="c">Enters the text KeywordTests.Test1.Variables.Placa in the 'DBETRPlaca' text edi...</div></div>
                        <div class="row sel"><div class="gut"></div><div class="item lv2"><svg class="i"><use href="#g-click"/></svg><div class="name">DBETRCidadePlaca</div></div><div class="c">Click</div><div class="c">...</div><div class="c">Clicks the 'DBETRCidadePlaca' object.</div></div>
                        <div class="row sel"><div class="gut"></div><div class="item lv2"><svg class="i"><use href="#g-screen"/></svg><div class="name">DBETRCidadePlaca</div></div><div class="c">SetText</div><div class="c">Variables.cidade</div><div class="c">Enters the text KeywordTests.Test1.Variables.cidade in the 'DBETRCidadePlaca' ...</div></div>
                        <div class="row sel"><div class="gut"></div><div class="item lv2"><svg class="i"><use href="#g-keys"/></svg><div class="name">DBECodigo</div></div><div class="c">Keys</div><div class="c">Variables.estado</div><div class="c">Simulates one or several keypresses.</div></div>
                        <div class="row sel"><div class="gut"></div><div class="item lv2"><svg class="i"><use href="#g-comment"/></svg><div class="name">Até UF</div></div><div class="c"></div><div class="c"></div><div class="c"></div></div>
                        <div class="row sel"><div class="gut"></div><div class="item lv2"><svg class="i"><use href="#g-click"/></svg><div class="name">DBLModeloVeiculo</div></div><div class="c">Click</div><div class="c">...</div><div class="c">Clicks the 'DBLModeloVeiculo' object.</div></div>
                        <div class="row"><div class="gut"></div><div class="item lv1"><svg class="x"><use href="#expand"/></svg><svg class="i vcl" viewBox="0 0 14 18"><rect width="14" height="18" fill="#fff"/><text x="1" y="14" font-size="7" fill="#0d4f9c">VCL</text></svg><div class="name">TcxComboBoxPopupWindow</div></div><div class="c"></div><div class="c"></div><div class="c"></div></div>
                        <div class="row"><div class="gut"></div><div class="item lv2"><svg class="i"><use href="#g-click"/></svg><div class="name">TcxCustomLookupDBGrid</div></div><div class="c">Click</div><div class="c">...</div><div class="c">Clicks the 'TcxCustomLookupDBGrid' object.</div></div>
                        <div class="row"><div class="gut"></div><div class="item lv1"><svg class="x"><use href="#expand"/></svg><svg class="i vcl" viewBox="0 0 14 18"><rect width="14" height="18" fill="#fff"/><text x="1" y="14" font-size="7" fill="#0d4f9c">VCL</text></svg><div class="name">Fm_Transportador</div></div><div class="c"></div><div class="c"></div><div class="c"></div></div>
                        <div class="row"><div class="gut"></div><div class="item lv2"><svg class="i"><use href="#g-click"/></svg><div class="name">pnlVeiculo</div></div><div class="c">Click</div><div class="c">...</div><div class="c">Clicks the 'pnlVeiculo' object.</div></div>
                        <div class="row"><div class="gut"></div><div class="item lv2"><svg class="i"><use href="#g-click"/></svg><div class="name">DBLTipoVeiculo</div></div><div class="c">Click</div><div class="c">...</div><div class="c">Clicks the 'DBLTipoVeiculo' object.</div></div>
                        <div class="row"><div class="gut"></div><div class="item lv1"><svg class="x"><use href="#expand"/></svg><svg class="i vcl" viewBox="0 0 14 18"><rect width="14" height="18" fill="#fff"/><text x="1" y="14" font-size="7" fill="#0d4f9c">VCL</text></svg><div class="name">TcxComboBoxPopupWindow</div></div><div class="c"></div><div class="c"></div><div class="c"></div></div>
                        <div class="row"><div class="gut"></div><div class="item lv2"><svg class="i"><use href="#g-click"/></svg><div class="name">TcxCustomLookupDBGrid</div></div><div class="c">Click</div><div class="c">...</div><div class="c">Clicks the 'TcxCustomLookupDBGrid' object.</div></div>
                        <div class="row"><div class="gut"></div><div class="item lv1"><svg class="x"><use href="#expand"/></svg><svg class="i vcl" viewBox="0 0 14 18"><rect width="14" height="18" fill="#fff"/><text x="1" y="14" font-size="7" fill="#0d4f9c">VCL</text></svg><div class="name">Fm_Transportador</div></div><div class="c"></div><div class="c"></div><div class="c"></div></div>
                        <div class="row"><div class="gut"></div><div class="item lv2"><svg class="i"><use href="#g-click"/></svg><div class="name">DBECodigoMotorista</div></div><div class="c">Click</div><div class="c">...</div><div class="c">Clicks the 'DBECodigoMotorista' object.</div></div>
                        <div class="row"><div class="gut"></div><div class="item lv2"><svg class="i"><use href="#g-delay"/></svg><div class="name">Delay</div></div><div class="c"></div><div class="c">1000, ...</div><div class="c">Delays the test execution for the specified time period.</div></div>
                        <div class="row"><div class="gut"></div><div class="item lv2"><svg class="i"><use href="#g-keys"/></svg><div class="name">DBECodigoMotorista</div></div><div class="c">Keys</div><div class="c">"714[Enter]"</div><div class="c">Simulates one or several keypresses.</div></div>
                        <div class="row"><div class="gut"></div><div class="item lv1 leafless"><svg class="i"><use href="#g-delay"/></svg><div class="name">Delay</div></div><div class="c"></div><div class="c">1000, ...</div><div class="c">Delays the test execution for the specified time period.</div></div>
                        <div class="row"><div class="gut"></div><div class="item lv1"><svg class="x"><use href="#expand"/></svg><svg class="i vcl" viewBox="0 0 14 18"><rect width="14" height="18" fill="#fff"/><text x="1" y="14" font-size="7" fill="#0d4f9c">VCL</text></svg><div class="name">Fm_Busca</div></div><div class="c"></div><div class="c"></div><div class="c"></div></div>
                        <div class="row"><div class="gut"></div><div class="item lv2"><svg class="i"><use href="#g-click"/></svg><div class="name">BTOk</div></div><div class="c">ClickButton</div><div class="c"></div><div class="c">Clicks the 'BTOk' button.</div></div>
                    </div>
                    <div class="vscroll steps-scroll"><i class="up"></i><b></b><i class="down"></i></div>
                </div>

                <div class="tabs-under steps-tabs">
                    <div class="utab on t-steps"><svg><use href="#t-unit"/></svg><span>Test Steps</span></div>
                    <div class="utab t-vars"><svg><use href="#doc-x"/></svg><span>Variables</span></div>
                    <div class="utab t-params"><svg><use href="#doc-params"/></svg><span>Parameters</span></div>
                </div>

                <div class="pane-head vis-head">
                    <svg class="vis-icon" viewBox="0 0 18 18"><rect y="3" width="14" height="15" fill="#0a96e6"/><path d="M2 15l4-5 3 3 3-2v5z" fill="#212836"/><path d="M14 1h3v8h-3z" fill="none" stroke="#d6d9de"/></svg>
                    <span>Test Visualizer</span>
                    <div class="pane-btns"><svg><use href="#restore"/></svg></div>
                </div>

                <div class="pane-head stack-head">
                    <span>Call Stack</span>
                    <div class="pane-btns"><span>?</span><svg><use href="#pin"/></svg><span>X</span></div>
                </div>

                <div class="stack">
                    <div class="stack-row">Call Stack</div>
                </div>

                <div class="tabs-under stack-tabs">
                    <div class="utab on t-call">Call Stack</div>
                    <div class="utab t-locals">Locals</div>
                    <div class="utab t-watch">Watch List</div>
                    <div class="utab t-break">Breakpoints</div>
                </div>
            </main>
        </div>

        <div class="bottom-tabs">
            <div class="btab t-book">Bookmarks</div>
            <div class="btab t-search">Search/Replace Results</div>
            <div class="btab on t-todo">To Do</div>
        </div>

        <div class="tc-status">
            <span class="off">CAPS</span><span>NUM</span><span class="off">SCRL</span><span>OVR</span><span></span><i></i>
        </div>

        <!-- runner widget over the title bar -->
        <div class="runner-frame">
            <div class="runner">
                <div class="runner-bar">
                    <svg class="runner-logo"><use href="#tc"/></svg>
                    <i></i>
                    <b class="r-pause"></b>
                    <b class="r-stop"></b>
                </div>
                <div class="runner-info">
                    <div class="r-state">Stopping...</div>
                    <div class="r-name">Teste_Transportadora</div>
                </div>
            </div>
            <i class="frame-arrow"></i>
        </div>

        <div class="taskbar">
            <div class="tb-news">
                <div class="news-icon"><svg><use href="#news"/></svg><b>1</b></div>
                <div class="news-text"><span>Urgente</span><span class="muted">noticias</span></div>
            </div>
            <div class="tb-apps">
                <svg class="tb-start"><use href="#win"/></svg>
                <div class="tb-search"><svg class="glass"><use href="#glass"/></svg><span>Pesquisar</span><svg class="hills"><use href="#hills"/></svg></div>
                <div class="tb-app"><svg><use href="#blocks"/></svg></div>
                <div class="tb-app"><svg><use href="#explorer"/></svg></div>
                <div class="tb-app"><svg><use href="#store"/></svg></div>
                <div class="tb-app"><svg><use href="#chrome"/></svg></div>
                <div class="tb-app run"><svg><use href="#chrome"/></svg><b class="badge-k">K</b></div>
                <div class="tb-app run"><svg><use href="#discord"/></svg><b class="badge-r"></b></div>
                <div class="tb-app run"><svg><use href="#notepad"/></svg></div>
                <div class="tb-app active"><svg><use href="#leaf"/></svg></div>
                <div class="tb-app run"><svg><use href="#tc"/></svg></div>
            </div>
            <div class="tb-tray tray-full">
                <span class="chev">^</span>
                <svg class="tray-i" viewBox="0 0 18 24"><path d="M3 5l4-3 8 12-4 8-7-6z" fill="none" stroke="#222" stroke-width="1.3"/><path d="M2 2l14 20" stroke="#222"/></svg>
                <svg class="tray-i" viewBox="0 0 18 24"><path d="M3 2h9v14H3zM8 16v4M3 21h9" fill="none" stroke="#222" stroke-width="1.3"/><rect x="11" y="1" width="5" height="9" fill="#e8eef8" stroke="#222"/></svg>
                <svg class="tray-i" viewBox="0 0 18 24"><path d="M1 9h3l4-4v14l-4-4H1zM11 8c2 2 2 6 0 8M14 5c3 4 3 10 0 14" fill="none" stroke="#222" stroke-width="1.2"/></svg>
                <div class="tb-clock"><span>12:49</span><span>07/12/2023</span></div>
                <svg class="tray-bell"><use href="#bell"/></svg>
            </div>
        </div>
    </section>

</body>
</html>
```

FILE: styles.css
```css
* {
    box-sizing: border-box;
}

html, body {
    margin: 0;
    padding: 0;
    width: 3840px;
    height: 1080px;
    overflow: hidden;
}

body {
    display: flex;
    font-family: "Roboto", "Liberation Sans", sans-serif;
    font-size: 12px;
}

.sprites {
    display: none;
}

.screen {
    position: relative;
    width: 1920px;
    height: 1080px;
    display: flex;
    flex-direction: column;
    flex: none;
}

/* ---------- left screen ---------- */

.screen-app {
    background: #fff;
    font-family: "Noto Sans", "Liberation Sans", sans-serif;
    font-size: 11px;
}

.app-title {
    height: 33px;
    border-top: 1px solid #808080;
    display: flex;
    align-items: center;
    padding-left: 3px;
}

.qa-logo {
    width: 16px;
    height: 16px;
}

.qa-drop {
    margin-left: 8px;
    color: #555;
    font-size: 9px;
}

.app-name {
    margin-left: 795px;
    color: #0a8a52;
    font-size: 11px;
}

.app-controls {
    margin-left: auto;
    display: flex;
    align-items: center;
    gap: 23px;
    padding-right: 18px;
    color: #777;
    font-size: 12px;
}

.ctl {
    width: 12px;
    height: 14px;
}

.ctl-min {
    width: 10px;
    height: 2px;
    margin-top: 6px;
    background: #777;
}

.ribbon-tabs {
    height: 25px;
    display: flex;
    align-items: flex-start;
    gap: 4px;
    border-bottom: 1px solid #048043;
}

.ribbon-home {
    width: 56px;
    height: 24px;
    background: #048043;
    display: flex;
    align-items: center;
    justify-content: center;
}

.ribbon-home svg {
    width: 18px;
    height: 18px;
}

.ribbon-tab {
    width: 99px;
    height: 25px;
    border: 1px solid #048043;
    border-bottom: 1px solid #fff;
    color: #a6e3c3;
    text-align: center;
    line-height: 24px;
    font-size: 12px;
}

.ribbon {
    height: 95px;
    border-bottom: 1px solid #048043;
}

.ribbon-group {
    width: 280px;
    height: 88px;
    border-right: 1px solid #048043;
    padding: 5px 0 0 2px;
    display: flex;
    flex-direction: column;
}

.ribbon-btns {
    display: flex;
}

.rb-btn {
    display: flex;
    flex-direction: column;
    align-items: center;
    color: #0a7d50;
    text-align: center;
    line-height: 14px;
    font-size: 11.5px;
}

.rb-btn svg {
    width: 36px;
    height: 40px;
    margin-bottom: 1px;
}

.rb-exit {
    width: 60px;
}

.rb-exit svg {
    width: 34px;
    margin-left: 6px;
}

.rb-import {
    width: 64px;
}

.rb-nota {
    width: 78px;
}

.rb-bal {
    width: 70px;
}

.group-label {
    margin-top: auto;
    height: 16px;
    display: flex;
    align-items: center;
    justify-content: space-between;
    padding: 0 5px 0 10px;
    color: #222;
    font-size: 11.8px;
}

.launcher {
    width: 7px;
    height: 7px;
    border: 1px solid #888;
    border-right-width: 2px;
    border-bottom-width: 2px;
}

.app-body {
    flex: 1;
}

.app-status {
    height: 25px;
    background: #048043;
    color: #fff;
    display: flex;
    align-items: center;
    justify-content: space-between;
    padding: 0 3px 0 2px;
    font-size: 11px;
}

/* dialog sits over the app window */
.dialog {
    position: absolute;
    left: 353px;
    top: 216px;
    width: 1212px;
    height: 591px;
    background: #fff;
    border: 1px solid #aaa;
    border-radius: 7px;
    box-shadow: 0 6px 24px rgba(0, 0, 0, 0.25);
    overflow: hidden;
}

.dialog-title {
    height: 30px;
    background: #f2f2f2;
    display: flex;
    align-items: center;
    padding: 0 10px 0 8px;
    color: #8a8a8a;
    font-size: 11px;
    letter-spacing: -0.2px;
}

.dialog-logo {
    width: 16px;
    height: 16px;
    margin-right: 5px;
}

.dialog-close {
    margin-left: auto;
    font-size: 13px;
}

.dialog-body {
    display: flex;
    padding: 9px 0 0 8px;
}

.panel {
    height: 504px;
    border-top: 1px solid #999;
    border-right: 1px solid #aaa;
    display: flex;
    flex-direction: column;
    align-items: flex-start;
    gap: 10px;
    padding-top: 39px;
}

.panel-a {
    width: 398px;
    padding-left: 94px;
    margin-right: 14px;
}

.panel-b {
    width: 398px;
    padding-left: 94px;
    margin-right: 8px;
}

.panel-c {
    width: 373px;
    padding-left: 70px;
    padding-top: 38px;
    margin-top: 1px;
}

.field {
    height: 22px;
    border: 1px solid #5c5c5c;
    flex: none;
    display: flex;
}

.f100 {
    width: 100px;
}

.f175 {
    width: 175px;
}

.f290 {
    width: 290px;
}

.far {
    margin-top: 224px;
}

.split i {
    width: 53px;
    border-right: 1px solid #5c5c5c;
}

.check {
    width: 39px;
    height: 22px;
    flex: none;
    border: 1px solid #eaeaea;
    border-bottom-color: #bbb;
}

.blank {
    height: 22px;
    flex: none;
}

.doc-value {
    padding-left: 2px;
    margin-top: 2px;
    line-height: 13px;
}

.doc-value span {
    display: inline-block;
    background: #0078d7;
    color: #fff;
    font-size: 10.5px;
    letter-spacing: -0.2px;
    padding: 0 2px;
}

/* ---------- taskbar ---------- */

.taskbar {
    height: 48px;
    flex: none;
    display: grid;
    grid-template-columns: 639px auto 1fr;
    border-top: 1px solid #b9bec8;
    background: linear-gradient(90deg, #e4ecf7 0%, #e0e8f6 20%, #d2dcf3 40%, #d5dbf0 60%, #dce3f1 75%, #e3edf8 100%);
    font-family: "Noto Sans", "Liberation Sans", sans-serif;
    letter-spacing: 0;
}

.tb-news {
    display: flex;
    align-items: center;
    padding-left: 20px;
    gap: 7px;
}

.news-icon {
    position: relative;
    width: 23px;
    height: 24px;
}

.news-icon svg {
    width: 23px;
    height: 24px;
}

.news-icon b {
    position: absolute;
    right: -4px;
    top: -6px;
    width: 15px;
    height: 20px;
    border-radius: 8px;
    background: #b3141c;
    color: #fff;
    font-weight: 400;
    font-size: 10px;
    line-height: 20px;
    text-align: center;
}

.news-text {
    display: flex;
    flex-direction: column;
    color: #222;
    line-height: 16px;
    font-size: 11.5px;
}

.muted {
    color: #666;
}

.tb-apps {
    display: flex;
    align-items: center;
}

.tb-start {
    width: 22px;
    height: 23px;
}

.tb-search {
    width: 217px;
    height: 30px;
    margin: 0 3px 0 15px;
    border: 1px solid #b8c2d6;
    border-radius: 15px;
    background: #f4f7fd;
    display: flex;
    align-items: center;
    padding-left: 12px;
    color: #555;
    font-size: 12px;
    overflow: hidden;
}

.glass {
    width: 14px;
    height: 22px;
    margin-right: 10px;
}

.hills {
    width: 46px;
    height: 30px;
    margin-left: auto;
}

.tb-app {
    position: relative;
    width: 44px;
    height: 40px;
    display: flex;
    align-items: center;
    justify-content: center;
}

.tb-app svg {
    width: 24px;
    height: 28px;
}

.tb-app.run::after {
    content: '';
    position: absolute;
    left: 20px;
    bottom: -1px;
    width: 4px;
    height: 4px;
    border-radius: 50%;
    background: #7e8794;
}

.tb-app.active {
    width: 40px;
    margin: 0 2px;
    background: #fbe4e4;
    border-radius: 3px;
}

.tb-app.active::after {
    content: '';
    position: absolute;
    left: 15px;
    bottom: 0;
    width: 10px;
    height: 4px;
    background: #c9211e;
}

.badge-k {
    position: absolute;
    right: 5px;
    top: 2px;
    width: 14px;
    height: 20px;
    border-radius: 7px;
    background: #7b52c7;
    color: #fff;
    font-size: 9px;
    font-weight: 400;
    line-height: 20px;
    text-align: center;
}

.badge-r {
    position: absolute;
    right: 7px;
    top: 3px;
    width: 9px;
    height: 13px;
    border-radius: 5px;
    background: #ee5a5f;
}

.tb-tray {
    display: flex;
    justify-content: flex-end;
    align-items: center;
    padding-right: 23px;
}

.tb-clock {
    display: flex;
    flex-direction: column;
    align-items: flex-end;
    line-height: 16px;
    font-size: 11.5px;
    color: #333;
}

.tray-full {
    padding-right: 21px;
    gap: 10px;
}

.chev {
    margin-right: 9px;
    font-size: 12px;
    color: #222;
}

.tray-i {
    width: 18px;
    height: 24px;
}

.tray-i + .tb-clock {
    margin-left: 5px;
}

.tray-bell {
    width: 14px;
    height: 24px;
    margin-left: -2px;
}

/* ---------- right screen ---------- */

.screen-tc {
    background: #212836;
    color: #dfe3e8;
    font-size: 11.5px;
    letter-spacing: -0.2px;
}

.tc-title {
    height: 29px;
    flex: none;
    background: #20384a;
    display: flex;
    align-items: center;
    padding-left: 6px;
    color: #7d8b97;
    font-size: 12.5px;
    letter-spacing: 0;
}

.tc-logo {
    width: 16px;
    height: 16px;
    margin-right: 5px;
}

.tc-controls {
    margin-left: auto;
    display: flex;
    align-items: center;
    gap: 30px;
    padding-right: 12px;
    color: #e6e9ee;
}

.tc-controls svg {
    width: 12px;
    height: 14px;
}

.tc-menu {
    height: 23px;
    flex: none;
    display: flex;
    align-items: center;
    gap: 12px;
    padding-left: 4px;
}

.tc-menu .grip {
    margin-right: 1px;
}

.grip {
    width: 2px;
    height: 22px;
    flex: none;
    background: repeating-linear-gradient(to bottom, #7d8693 0 2px, transparent 2px 5px);
}

.tri {
    width: 0;
    height: 0;
    flex: none;
    border-left: 3px solid transparent;
    border-right: 3px solid transparent;
    border-top: 4px solid #d6d9de;
}

.tri.wide {
    border-left-width: 5px;
    border-right-width: 5px;
    border-top-width: 6px;
}

.sep {
    width: 1px;
    height: 28px;
    flex: none;
    background: #3b4352;
}

/* small nudges so toolbar items land on their slot */
.push2 {
    margin-left: 2px;
}

.push3 {
    margin-left: 3px;
}

.push4 {
    margin-left: 4px;
}

.pull2 {
    margin-left: -2px;
}

.pull3 {
    margin-left: -3px;
}

.pull4 {
    margin-left: -4px;
}

.toolbar {
    display: flex;
    align-items: center;
    flex: none;
}

.ic {
    width: 24px;
    height: 24px;
    flex: none;
}

.dim {
    color: #4a4f58;
}

.tb-text.off {
    color: #5f6670;
}

.tc-tools {
    height: 38px;
    padding-left: 4px;
    gap: 7px;
}

.tc-tools .grip.far {
    margin-left: 25px;
}

.stop {
    width: 24px;
    height: 24px;
    flex: none;
    background: #04a6ff;
}

.ic.phone {
    width: 16px;
    margin: 0 1px 0 2px;
}

.doc-tabs {
    height: 32px;
    flex: none;
    display: flex;
    align-items: flex-end;
    border-bottom: 3px solid #4d5661;
}

.doc-tab {
    width: 88px;
    height: 26px;
    background: #1a2130;
    border: 1px solid #4d5661;
    border-bottom: 0;
    text-align: center;
    line-height: 24px;
}

.doc-tab.on {
    width: 105px;
    height: 29px;
    background: #4d5661;
    line-height: 26px;
}

.tc-main {
    height: 865px;
    margin-top: 1px;
    flex: none;
    display: flex;
    gap: 6px;
    overflow: hidden;
}

.pane-head {
    height: 22px;
    flex: none;
    background: #4d5661;
    display: flex;
    align-items: center;
    padding: 0 5px 0 6px;
}

.pane-btns {
    margin-left: auto;
    display: flex;
    align-items: center;
    gap: 7px;
}

.pane-btns svg {
    width: 9px;
    height: 12px;
}

.box {
    width: 9px;
    height: 11px;
    border: 1px solid #e6e9ee;
}

.explorer {
    width: 234px;
    flex: none;
    display: flex;
    flex-direction: column;
    border-right: 1px solid #0f141c;
}

.ex-tools {
    height: 35px;
    padding-left: 4px;
    gap: 7px;
}

.ex-tools .sep {
    margin: 0 -2px 0 2px;
}

.tree-wrap {
    height: 790px;
    flex: none;
    display: flex;
    border-left: 1px solid #4d5661;
    border-top: 1px solid #4d5661;
}

.tree {
    width: 215px;
    flex: none;
    padding-top: 1px;
    background-color: #151c25;
    overflow: hidden;
    white-space: nowrap;
    background-image:
        repeating-linear-gradient(to bottom, #8a94a3 0 1px, transparent 1px 3px),
        repeating-linear-gradient(to bottom, #8a94a3 0 1px, transparent 1px 3px);
    background-size: 1px 243px, 1px 100%;
    background-position: 10px 0, 32px 0;
    background-repeat: no-repeat;
}

.tr {
    height: 21px;
    display: flex;
    align-items: center;
    color: #dfe3e8;
    position: relative;
}

.tr svg {
    width: 16px;
    height: 20px;
    flex: none;
    margin-right: 4px;
}

.tr svg.x {
    width: 7px;
    height: 7px;
    margin-right: 9px;
    margin-top: 5px;
}

.l1 {
    padding-left: 45px;
}

.l2 {
    padding-left: 65px;
}

.l3 {
    padding-left: 86px;
}

.l0.open {
    padding-left: 8px;
}

.l1.open {
    padding-left: 28px;
}

.l2.open {
    padding-left: 49px;
}

.tr.l2::before,
.tr.l3::before {
    content: '';
    position: absolute;
    height: 1px;
    top: 10px;
    background: repeating-linear-gradient(to right, #8a94a3 0 1px, transparent 1px 2px);
}

.tr.l2::before {
    left: 54px;
    width: 10px;
}

.tr.l3::before {
    left: 75px;
    width: 10px;
}

.tr.l2.open::before {
    left: 58px;
    width: 6px;
}

/* vertical guide of the project children */
.tr.l2,
.tr.l3 {
    background: repeating-linear-gradient(to bottom, #8a94a3 0 1px, transparent 1px 3px) 53px 0 / 1px 100% no-repeat;
}

.tr span {
    flex: none;
}

.strong {
    font-weight: 700;
}

.selected span {
    background: #474749;
    width: 109px;
    height: 20px;
    line-height: 20px;
    outline: 1px dotted #cfd3d8;
    outline-offset: -1px;
}

.plus {
    position: absolute;
    right: 7px;
    font-weight: 400;
    font-size: 18px;
    color: #6f7784;
}

.vscroll {
    width: 18px;
    flex: none;
    background: #4d5661;
    display: flex;
    flex-direction: column;
    align-items: center;
}

.vscroll b {
    width: 10px;
    background: #8090a8;
}

.vscroll .up,
.vscroll .down {
    width: 0;
    height: 0;
    border-left: 5px solid transparent;
    border-right: 5px solid transparent;
}

.vscroll .up {
    border-bottom: 7px solid #8090a8;
}

.vscroll .down {
    border-top: 7px solid #8090a8;
    margin-top: auto;
    margin-bottom: 5px;
}

.tree-scroll .up {
    margin-top: 5px;
}

.tree-scroll b {
    height: 245px;
    margin-top: 30px;
}

.hscroll {
    height: 18px;
    flex: none;
    width: 216px;
    background: #4d5661;
    display: flex;
    align-items: center;
    padding: 0 5px;
}

.hscroll b {
    width: 114px;
    height: 9px;
    background: #8090a8;
    margin-left: 8px;
}

.hscroll .left {
    width: 0;
    border-top: 5px solid transparent;
    border-bottom: 5px solid transparent;
    border-right: 5px solid #8090a8;
}

.hscroll .right {
    width: 0;
    border-top: 5px solid transparent;
    border-bottom: 5px solid transparent;
    border-left: 5px solid #8090a8;
    margin-left: auto;
}

.workspace {
    width: 1680px;
    flex: none;
    display: flex;
    flex-direction: column;
}

.ws-btns {
    gap: 9px;
    padding-right: 2px;
}

.ws-tabs {
    height: 35px;
    flex: none;
    display: flex;
    align-items: flex-end;
    border-bottom: 2px solid #4d5661;
}

.ws-tab {
    width: 85px;
    height: 30px;
    background: #4d5661;
    display: flex;
    align-items: center;
    padding-left: 6px;
}

.ws-tab svg {
    width: 16px;
    height: 20px;
    margin-right: 9px;
}

.ws-tab .close {
    margin-left: 11px;
}

.ws-tools {
    height: 38px;
    padding: 0 0 4px 4px;
    gap: 5px;
}

.ws-tools .tb-text {
    margin-right: 1px;
    letter-spacing: 0;
}

.ws-tools .sep {
    margin-right: 1px;
}

.arr-v {
    width: 12px;
    height: 24px;
    flex: none;
    margin-left: 4px;
}

.arr-v + .arr-v {
    margin-left: 14px;
}

.arr-h {
    width: 22px;
    height: 12px;
    flex: none;
    margin-left: 9px;
}

.arr-h + .arr-h {
    margin-left: 4px;
}

.steps {
    height: 513px;
    flex: none;
    display: flex;
    border-top: 1px solid #5a6373;
    border-left: 1px solid #5a6373;
    overflow: hidden;
}

.steps-table {
    width: 1661px;
    flex: none;
    overflow: hidden;
    background: #151c25;
}

.row {
    height: 21px;
    display: grid;
    grid-template-columns: 32px 422px 403px 402px 402px;
    color: #d8dce2;
}

.row .c {
    line-height: 21px;
    white-space: nowrap;
    overflow: hidden;
}

.gut {
    background: #212836;
    border-right: 1px solid #4d5661;
    border-bottom: 1px solid #5a6373;
}

.row.head {
    height: 19px;
    background: #212836;
    border-bottom: 1px solid #5a6373;
}

.row.head .c {
    line-height: 18px;
}

.row.head .c:nth-child(2) {
    padding-left: 3px;
}

.row.head .gut {
    border-bottom: 0;
}

/* dashed frame on the focused row, from the label to the scrollbar */
.row.focus .name,
.row.focus .c {
    height: 21px;
    border-top: 1px dotted #cfd3d8;
    border-bottom: 1px dotted #cfd3d8;
    line-height: 19px;
}

.row.focus .name {
    border-left: 1px dotted #cfd3d8;
    padding-left: 0;
}

.row.focus .c:last-child {
    border-right: 1px dotted #cfd3d8;
}

.row.sel .c {
    background: #474749;
}

.item {
    display: flex;
    align-items: center;
    white-space: nowrap;
    background-image:
        repeating-linear-gradient(to bottom, #8a94a3 0 1px, transparent 1px 3px),
        repeating-linear-gradient(to bottom, #8a94a3 0 1px, transparent 1px 3px);
    background-size: 1px 100%, 1px 100%;
    background-position: 11px 0, 32px 0;
    background-repeat: no-repeat;
}

.item .x {
    width: 8px;
    height: 8px;
    flex: none;
    margin-top: 5px;
}

.item .i {
    width: 16px;
    height: 20px;
    flex: none;
}

.name {
    flex: 1;
    height: 21px;
    line-height: 21px;
    padding-left: 1px;
}

.lv0 {
    padding-left: 9px;
    background-size: 0 0, 0 0;
}

.lv0 .x {
    margin-right: 7px;
}

.lv0 .i {
    margin-right: 4px;
}

.lv1 {
    padding-left: 29px;
}

.lv1 .x {
    margin-right: 8px;
}

.lv1 .i {
    margin-right: 3px;
}

.lv1 .vcl {
    width: 14px;
    height: 18px;
    margin: 0 4px 0 1px;
}

.lv1.leafless {
    padding-left: 45px;
}

.lv2 {
    padding-left: 66px;
    background-image:
        repeating-linear-gradient(to bottom, #8a94a3 0 1px, transparent 1px 3px),
        repeating-linear-gradient(to bottom, #8a94a3 0 1px, transparent 1px 3px),
        repeating-linear-gradient(to bottom, #8a94a3 0 1px, transparent 1px 3px),
        repeating-linear-gradient(to right, #8a94a3 0 1px, transparent 1px 2px);
    background-size: 1px 100%, 1px 100%, 1px 100%, 12px 1px;
    background-position: 11px 0, 32px 0, 53px 0, 53px 10px;
}

.lv2 .i {
    margin-right: 3px;
}

.row.sel .name {
    background: #474749;
}

.steps-scroll .up {
    margin-top: 4px;
}

.steps-scroll b {
    width: 13px;
    height: 440px;
    margin-top: 7px;
}

.tabs-under {
    flex: none;
    display: flex;
    align-items: flex-start;
}

.steps-tabs {
    height: 40px;
    border-top: 2px solid #5a6373;
}

.utab {
    height: 25px;
    background: #1a2130;
    border: 1px solid #4d5661;
    border-top: 0;
    display: flex;
    align-items: center;
    gap: 6px;
    padding-left: 5px;
}

.utab.on {
    height: 29px;
    background: #4d5661;
    padding-left: 6px;
}

.utab svg {
    width: 16px;
    height: 20px;
}

.t-steps {
    width: 88px;
}

.t-vars {
    width: 79px;
}

.t-params {
    width: 90px;
}

.vis-head {
    height: 24px;
    padding-right: 2px;
}

.vis-icon {
    width: 18px;
    height: 18px;
    margin-right: 5px;
}

.stack-head {
    margin-top: 8px;
}

.stack {
    height: 128px;
    flex: none;
    margin-top: 1px;
    background: #151c25;
    border: 1px solid #5a6373;
    border-bottom: 3px solid #5a6373;
}

.stack-row {
    height: 19px;
    background: #212836;
    border-bottom: 1px solid #3a3f48;
    padding-left: 2px;
    line-height: 19px;
}

.stack-tabs .utab {
    height: 24px;
}

.stack-tabs .utab.on {
    height: 29px;
}

.t-call {
    width: 60px;
}

.t-locals {
    width: 43px;
}

.t-watch {
    width: 64px;
}

.t-break {
    width: 70px;
}

.bottom-tabs {
    height: 21px;
    flex: none;
    display: flex;
    padding-left: 1px;
}

.btab {
    height: 21px;
    padding-left: 12px;
    background: #212836;
    border: 1px solid #4d5661;
    border-top: 0;
    display: flex;
    align-items: center;
}

.btab.on {
    background: #4d5661;
}

.t-book {
    width: 77px;
}

.t-search {
    width: 139px;
}

.t-todo {
    width: 55px;
}

.tc-status {
    height: 24px;
    flex: none;
    display: flex;
    align-items: center;
    padding-left: 49px;
}

.tc-status span {
    height: 15px;
    width: 41px;
    border-left: 1px solid #c8ccd2;
    text-align: center;
    line-height: 15px;
}

.tc-status span:last-of-type {
    width: 54px;
    border-right: 1px solid #c8ccd2;
}

.tc-status .off {
    color: #6d7682;
}

.tc-status i {
    width: 1px;
    height: 15px;
    background: #e6e9ee;
    margin-left: auto;
    margin-right: 4px;
}

/* floating runner widget */
.runner-frame {
    position: absolute;
    left: 1523px;
    top: 20px;
    width: 397px;
    height: 150px;
    border: 2px solid rgba(110, 120, 130, 0.55);
    border-radius: 8px;
    box-shadow: 0 8px 30px rgba(0, 0, 0, 0.18);
}

.runner {
    position: absolute;
    right: 7px;
    top: 2px;
    width: 125px;
}

.runner-bar {
    width: 103px;
    height: 41px;
    margin-left: 22px;
    border: 1px solid #7b8798;
    display: flex;
    align-items: center;
    padding-left: 5px;
}

.runner-logo {
    width: 28px;
    height: 28px;
}

.runner-bar i {
    width: 1px;
    height: 34px;
    background: #7b8798;
    margin-left: 6px;
}

.r-pause {
    width: 16px;
    height: 16px;
    margin-left: 9px;
    background: linear-gradient(90deg, #9fdcff 0 6px, transparent 6px 9px, #9fdcff 9px);
}

.r-stop {
    width: 16px;
    height: 16px;
    margin-left: 10px;
    background: #04a6ff;
}

.runner-info {
    margin-top: 4px;
    border: 1px solid #7b8798;
    height: 39px;
    padding: 1px 4px;
    text-align: right;
    background: #212836;
}

.r-state {
    line-height: 16px;
    border-bottom: 1px solid #8a94a3;
    height: 17px;
}

.r-name {
    line-height: 18px;
    text-align: left;
}

.frame-arrow {
    position: absolute;
    right: 3px;
    bottom: 3px;
    width: 0;
    height: 0;
    border-left: 5px solid transparent;
    border-right: 5px solid transparent;
    border-top: 6px solid #e6e9ee;
}
```
